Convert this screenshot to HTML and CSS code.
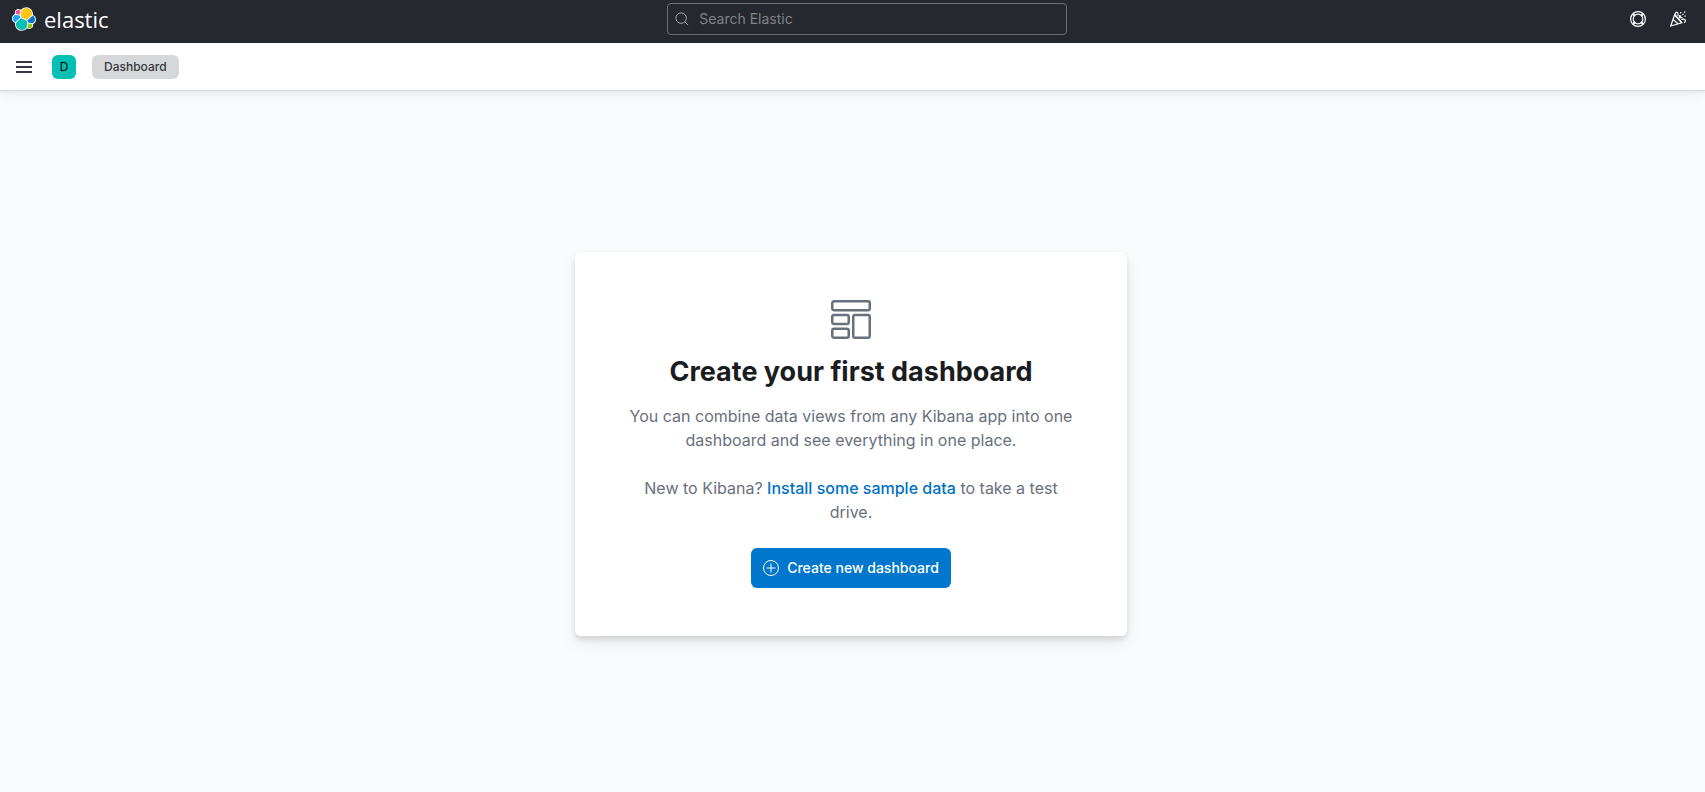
FILE: index.html
```html
<!DOCTYPE html>
<html lang="en">
<head>
<meta charset="utf-8">
<title>Dashboard - Elastic</title>
<link rel="stylesheet" href="styles.css">
</head>
<body>
<header class="topbar">
  <div class="topbar-section">
    <a class="brand" href="#">
      <svg class="brand-mark" viewBox="0 0 32 32" aria-hidden="true">
        <defs>
          <g id="cluster">
            <path class="c-yellow" d="M12.58 13.787l7.002 3.211 7.066-6.213a7.849 7.849 0 00.152-1.557c0-4.287-3.464-7.762-7.735-7.762a7.73 7.73 0 00-6.383 3.375l-1.175 6.117z"/>
            <path class="c-teal" d="M5.333 21.214a7.953 7.953 0 00-.152 1.585c0 4.3 3.474 7.783 7.76 7.783a7.76 7.76 0 006.408-3.389l1.166-6.1-1.556-2.991-7.03-3.213z"/>
            <path class="c-pink" d="M5.288 9.067l4.8 1.137L11.14 4.73a3.785 3.785 0 00-2.318-.8 3.814 3.814 0 00-3.807 3.82c0 .443.092.887.273 1.317z"/>
            <path class="c-sky" d="M4.872 10.214c-2.145.711-3.604 2.77-3.604 5.04 0 2.21 1.363 4.183 3.41 4.964l6.733-6.107-1.237-2.65z"/>
            <path class="c-green" d="M20.873 27.193a3.77 3.77 0 002.305.797 3.813 3.813 0 003.81-3.82c0-.463-.08-.908-.24-1.317l-4.796-1.127z"/>
            <path class="c-blue" d="M21.848 20.563l5.28 1.236c2.146-.71 3.605-2.77 3.605-5.041 0-2.207-1.366-4.177-3.416-4.957l-6.905 6.071z"/>
          </g>
        </defs>
        <use class="cluster-outline" href="#cluster"/>
        <use href="#cluster"/>
      </svg>
      <span class="brand-name">elastic</span>
    </a>
  </div>
  <div class="search">
    <svg class="icon search-icon" viewBox="0 0 16 16" aria-hidden="true"><circle cx="7" cy="7" r="6"/><path d="M11.300 11.300l3.700 3.700"/></svg>
    <input class="search-input" type="text" placeholder="Search Elastic" aria-label="Search Elastic">
  </div>
  <div class="topbar-section topbar-actions">
    <button class="header-button" type="button" aria-label="Help">
      <svg class="icon" viewBox="0 0 16 16"><circle class="ring" cx="8" cy="8" r="7.400"/><circle class="ring" cx="8" cy="8" r="4.800"/><path class="ring-band" d="M3.300 3.300l1.600 1.600M12.700 3.300l-1.600 1.600M3.300 12.700l1.600-1.600M12.700 12.700l-1.600-1.600"/></svg>
    </button>
    <button class="header-button" type="button" aria-label="What's new">
      <svg class="icon" viewBox="0 0 16 16"><path class="ring" d="M4.700 3.500L.7 15l11.200-3.200z"/><path class="ring" d="M3.200 8.500l5 4.500M4.800 4l7 7.800"/><path class="ring" d="M5.500 3C5.300 1.300 6.600.6 7.500 1.500s.5 2.200.1 3.200M11.300 8.600c1.200-.8 3.400-.7 3.900.5s-.3 2.300-1.200 2.500"/><path class="ring" d="M9.300 6.700l2-2.200M9.400 4v2.700h3"/><path class="confetti" d="M10 1h1.300v1.300H10zM14 .4h1.300v1.300H14zM12.300 2.700h1.300V4h-1.300zM14.500 4.500h1.300v1.300h-1.300z"/></svg>
    </button>
  </div>
</header>

<nav class="navbar" aria-label="Breadcrumbs">
  <button class="menu-button" type="button" aria-label="Toggle primary navigation">
    <svg class="menu-icon" viewBox="0 0 16 12"><path d="M0 0h16v2H0zM0 5h16v2H0zM0 10h16v2H0z"/></svg>
  </button>
  <button class="space-avatar" type="button" aria-label="Default space">D</button>
  <span class="breadcrumb" aria-current="page">Dashboard</span>
</nav>

<main class="page">
  <section class="prompt">
    <svg class="prompt-icon" viewBox="0 0 40 40" aria-hidden="true"><rect x="1.250" y="1.250" width="37.500" height="9" rx="1.800"/><rect x="1.250" y="15" width="16.500" height="9" rx="1.800"/><rect x="1.250" y="28.750" width="16.500" height="9" rx="1.800"/><rect x="22.250" y="15" width="16.500" height="22.750" rx="1.800"/></svg>
    <h1 class="prompt-title">Create your first dashboard</h1>
    <p class="prompt-text">You can combine data views from any Kibana app into one dashboard and see everything in one place.</p>
    <p class="prompt-text">New to Kibana? <a class="link" href="#">Install some sample data</a> to take a test drive.</p>
    <button class="primary-button" type="button">
      <svg class="icon" viewBox="0 0 16 16" aria-hidden="true"><circle cx="8" cy="8" r="7.500"/><path d="M8 3.500v9M3.500 8h9"/></svg>
      <span>Create new dashboard</span>
    </button>
  </section>
</main>
</body>
</html>
```
FILE: styles.css
```css
* {
  box-sizing: border-box;
}

body {
  margin: 0;
  min-height: 100vh;
  display: flex;
  flex-direction: column;
  background: #fafbfd;
  color: #343741;
  font-family: Inter, "Liberation Sans", sans-serif;
  font-size: 16px;
  line-height: 24px;
}

button,
input {
  font: inherit;
  color: inherit;
}

button {
  padding: 0;
  border: 0;
  background: none;
  cursor: pointer;
}

.icon {
  width: 16px;
  height: 16px;
  flex: none;
  fill: none;
  stroke: currentColor;
}

/* Top bar */

.topbar {
  display: flex;
  align-items: flex-start;
  padding: 3px 7px 8px 12px;
  background: #25282f;
  color: #fff;
}

.topbar-section {
  display: flex;
  align-items: center;
  flex: 1 1 auto;
  height: 32px;
  padding-right: 8px;
}

.topbar-actions {
  justify-content: flex-end;
  padding-right: 0;
}

.brand {
  display: flex;
  align-items: center;
  gap: 8px;
  color: #fff;
  text-decoration: none;
}

.brand-mark {
  width: 24px;
  height: 24px;
}

.brand-name {
  font-family: "Open Sans", "Noto Sans", sans-serif;
  font-size: 22px;
  line-height: 32px;
}

.cluster-outline {
  stroke: #fff;
  stroke-width: 2.5;
}

.c-yellow { fill: #fec514; }
.c-teal { fill: #00bfb3; }
.c-pink { fill: #f04e98; }
.c-sky { fill: #1ba9f5; }
.c-green { fill: #93c90e; }
.c-blue { fill: #0077cc; }

.search {
  display: flex;
  align-items: center;
  width: 400px;
  height: 32px;
  padding: 0 7px;
  gap: 10px;
  border: 1px solid #6b6d72;
  border-radius: 4px;
}

.search-icon {
  width: 14px;
  height: 14px;
  color: #b4b6ba;
}

.search-input {
  flex: 1;
  min-width: 0;
  padding: 0;
  border: 0;
  outline: 0;
  background: none;
  font-size: 14px;
}

.search-input::placeholder {
  color: #818388;
  opacity: 1;
}

.header-button {
  display: flex;
  align-items: center;
  justify-content: center;
  width: 40px;
  height: 32px;
}

.ring {
  stroke-width: 1.2;
}

.ring-band {
  stroke-width: 2.2;
}

.confetti {
  fill: currentColor;
  stroke: none;
}

/* Breadcrumb bar */

.navbar {
  display: flex;
  align-items: center;
  height: 48px;
  padding: 0 16px;
  background: #fff;
  border-bottom: 1px solid #d3dae6;
  box-shadow: 0 2px 2px rgba(0, 0, 0, 0.03), 0 4px 12px rgba(0, 0, 0, 0.06);
  font-size: 12px;
}

.menu-button {
  display: flex;
  margin-right: 20px;
}

.menu-icon {
  width: 16px;
  height: 12px;
  fill: #343741;
}

.space-avatar {
  width: 24px;
  height: 24px;
  margin-right: 16px;
  border-radius: 6px;
  background: #00bfb3;
  color: #000;
}

.breadcrumb {
  padding: 0 12px;
  border-radius: 6px;
  background: #d6d7d9;
  font-weight: 500;
}

/* Empty state */

.page {
  flex: 1;
  display: flex;
  align-items: center;
  justify-content: center;
  padding: 5px 3px 0 0;
}

.prompt {
  display: flex;
  flex-direction: column;
  align-items: center;
  max-width: 552px;
  padding: 48px;
  border-radius: 6px;
  background: #fff;
  box-shadow: 0 3px 5px rgba(0, 0, 0, 0.08), 0 5px 10px rgba(0, 0, 0, 0.06), 0 8px 20px rgba(0, 0, 0, 0.05);
  text-align: center;
}

.prompt-icon {
  width: 40px;
  height: 40px;
  fill: none;
  stroke: #69707d;
  stroke-width: 2.5;
}

.prompt-title {
  margin: 16px 0;
  color: #1a1c21;
  font-size: 27px;
  font-weight: 700;
  line-height: 32px;
}

.prompt-text {
  margin: 0 0 24px;
  color: #69707d;
}

.link {
  color: #0071c2;
  font-weight: 500;
  text-decoration: none;
}

.primary-button {
  display: flex;
  align-items: center;
  gap: 8px;
  height: 40px;
  padding: 0 12px;
  border-radius: 6px;
  background: #0077cc;
  color: #fff;
  font-size: 14px;
  font-weight: 500;
}
```
